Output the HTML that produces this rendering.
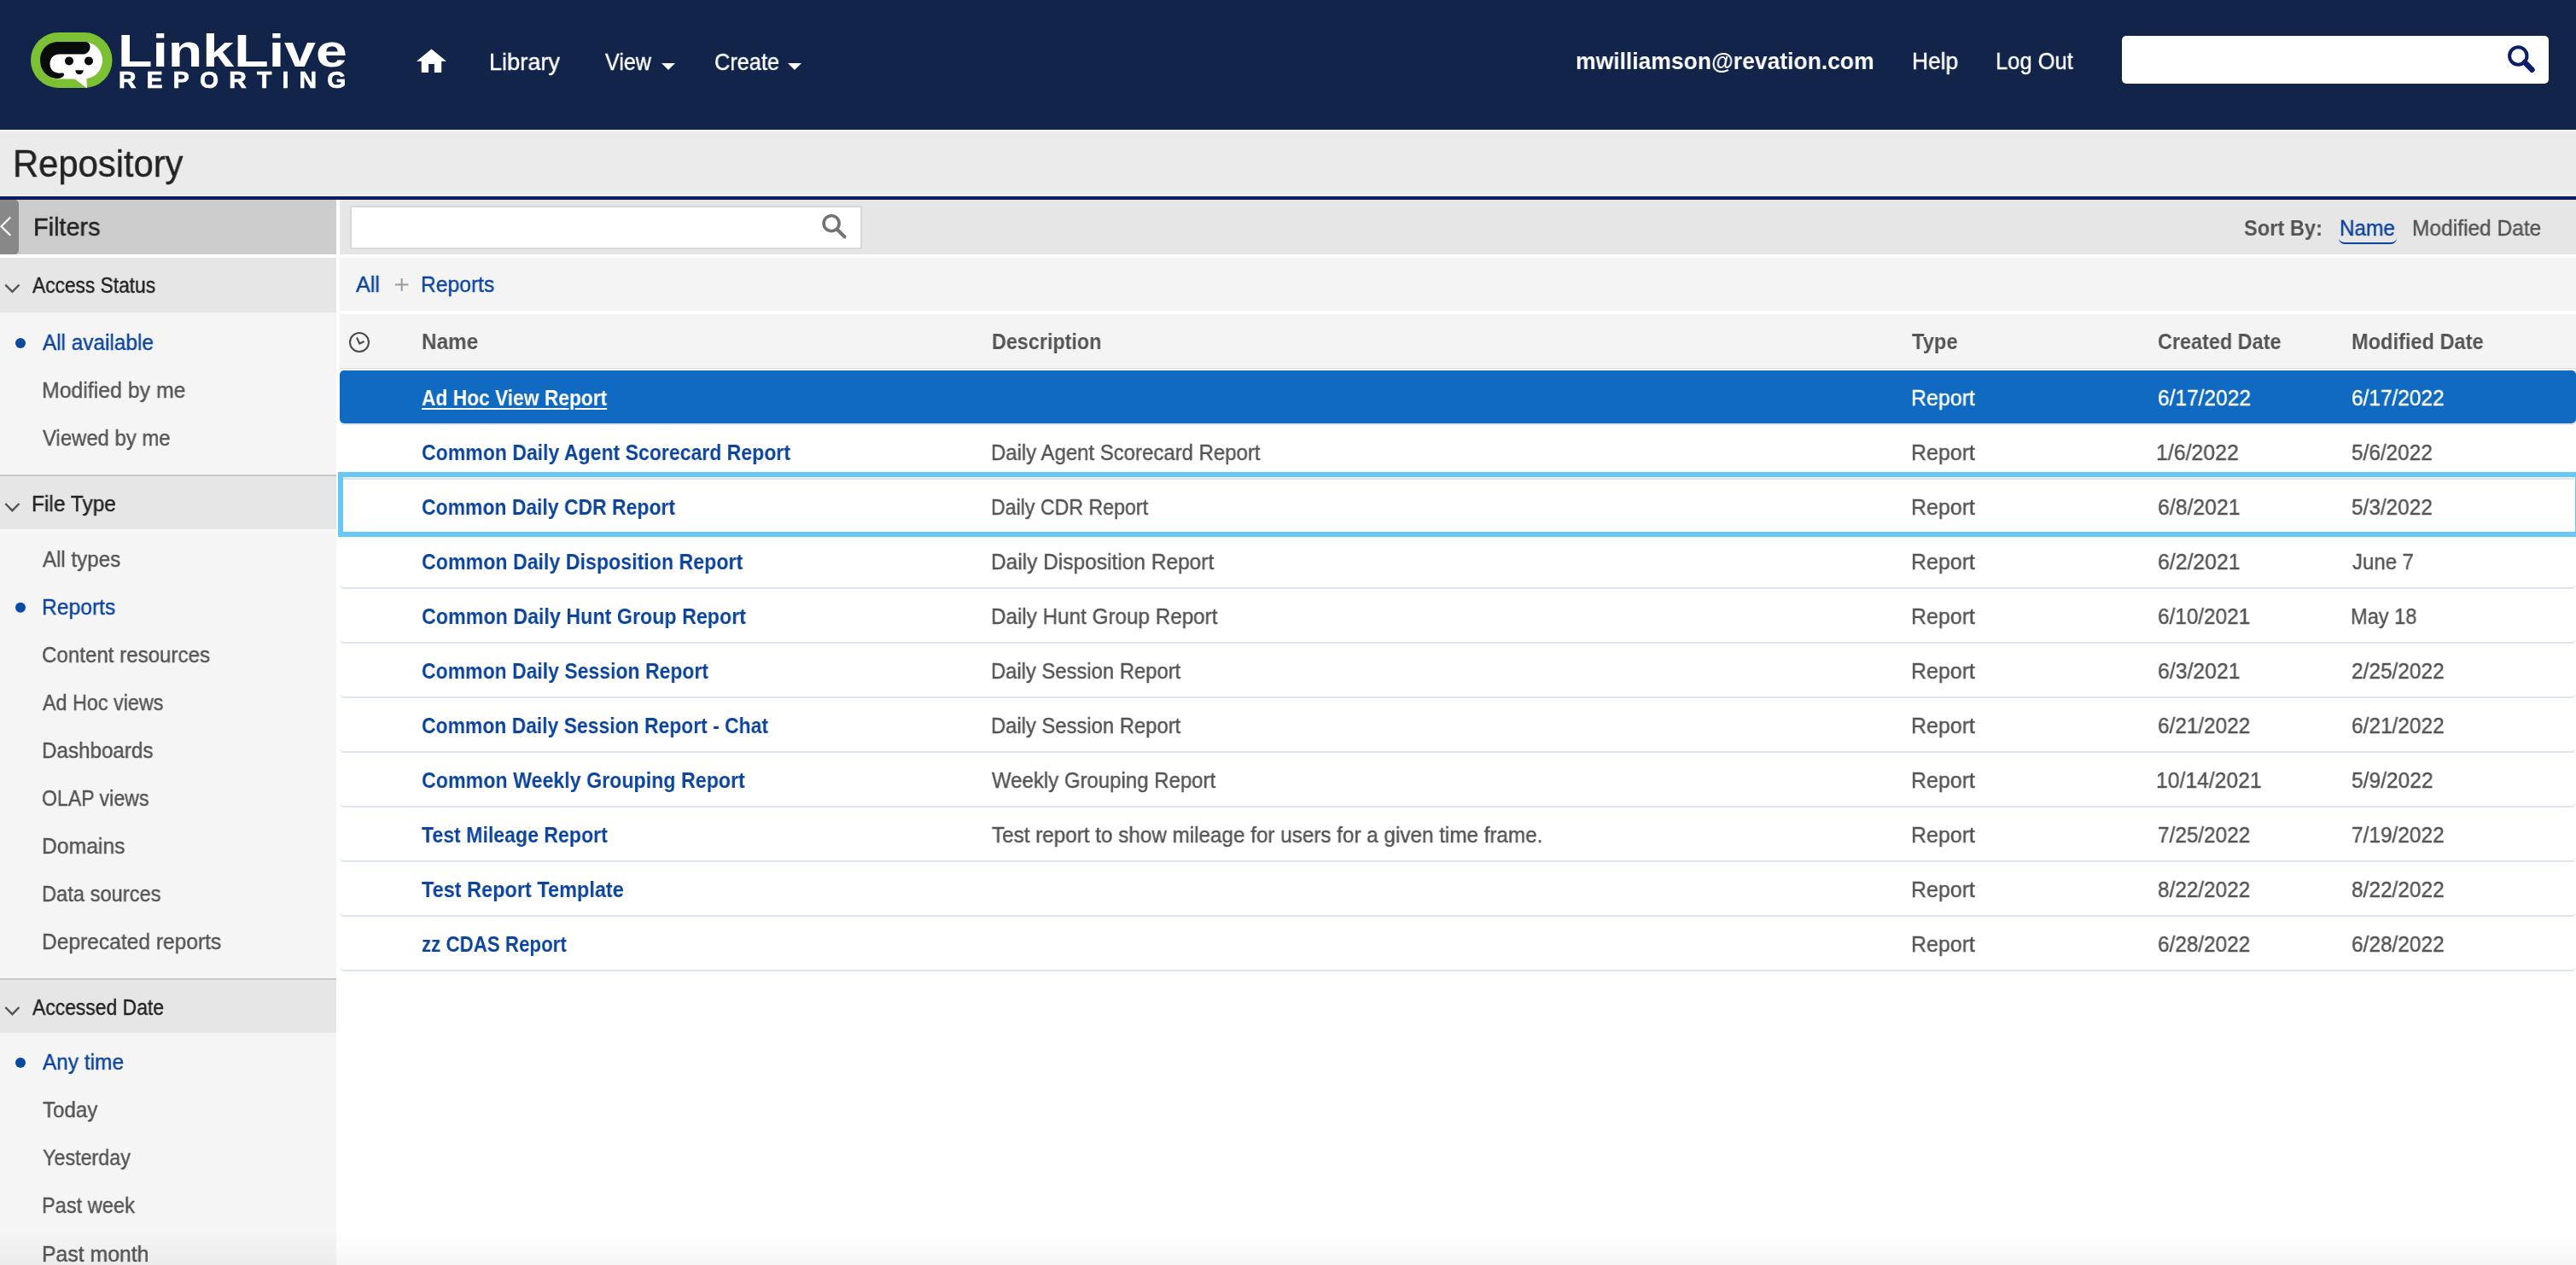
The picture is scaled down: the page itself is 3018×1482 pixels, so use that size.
<!DOCTYPE html>
<html>
<head>
<meta charset="utf-8">
<style>
html,body{margin:0;padding:0;}
body{width:3018px;height:1482px;overflow:hidden;position:relative;background:#fff;font-family:"Liberation Sans", sans-serif;}
.b{position:absolute;}
.t{position:absolute;white-space:nowrap;line-height:1;transform-origin:0 0;will-change:transform;font-family:"Liberation Sans", sans-serif;}
svg{position:absolute;overflow:visible;}
</style>
</head>
<body>
<!-- header -->
<div class="b" style="left:0;top:0;width:3018px;height:152px;background:#12244a"></div>
<div class="b" style="left:0;top:152px;width:3018px;height:2px;background:#fff"></div>
<div class="b" style="left:0;top:154px;width:3018px;height:76px;background:#ebebeb"></div>
<div class="b" style="left:0;top:230px;width:3018px;height:4px;background:#0a1d63"></div>

<!-- logo -->
<svg style="left:0;top:0" width="420" height="152" viewBox="0 0 420 152">
  <rect x="36" y="38" width="95.5" height="65" rx="32.5" ry="32.5" fill="#7cc033"/>
  <rect x="47" y="49" width="73" height="43.5" rx="21.7" ry="21.7" fill="#fff"/>
  <path d="M87,92 L102,103.5 L101.5,92 Z" fill="#fff"/>
  <path d="M68,49 L100,49 C106,49 107,56 104,60 C102,63 99,63.5 96,63.5 L70,63.5 C62,63.5 58.5,69 58.5,75 C58.5,82 64,86.5 72,85.5 C75,85 76,87 74.5,89 C73,91 70,92 68,92 C56,92 47,83 47,70.5 C47,58 56,49 68,49 Z" fill="#0a0c0c"/>
  <circle cx="81" cy="71.4" r="5" fill="#0a0c0c"/>
  <circle cx="104" cy="71.4" r="5" fill="#0a0c0c"/>
  <path d="M88.3,82.2 L97.8,82.2 C97.5,85.5 95.5,87.3 93,87.3 C90.5,87.3 88.6,85.5 88.3,82.2 Z" fill="#0a0c0c"/>
</svg>
<div class="t" style="left:137.5px;top:32.9px;font-size:53px;font-weight:700;color:#fff;transform:scaleX(1.25);letter-spacing:0px">LinkLive</div>
<div class="t" style="left:139px;top:79.4px;font-size:28.4px;font-weight:700;color:#fff;letter-spacing:12.2px;-webkit-text-stroke:0.7px #fff">REPORTING</div>

<!-- home icon -->
<svg style="left:0;top:0" width="600" height="152">
  <path d="M505.5,57.6 L523,71.7 L517.2,71.7 L517.2,85 L508.9,85 L508.9,75 L502.1,75 L502.1,85 L493.8,85 L493.8,71.7 L488,71.7 Z" fill="#fff"/>
  <path d="M775,74 L791,74 L783,82 Z" fill="#fff"/>
</svg>
<svg style="left:0;top:0" width="1000" height="152">
  <path d="M923,74 L939,74 L931,82 Z" fill="#fff"/>
</svg>

<!-- header search -->
<div class="b" style="left:2486px;top:42px;width:500px;height:56px;background:#fff;border-radius:5px"></div>
<svg style="left:0;top:0" width="3018" height="152">
  <circle cx="2950.3" cy="65.5" r="10.2" fill="none" stroke="#0a1f66" stroke-width="4"/>
  <line x1="2958" y1="73" x2="2966.5" y2="81.7" stroke="#0a1f66" stroke-width="6.5" stroke-linecap="round"/>
</svg>

<!-- sidebar -->
<div class="b" style="left:0;top:234px;width:394px;height:1248px;background:#f5f5f5"></div>
<div class="b" style="left:394px;top:234px;width:4px;height:1248px;background:#fff"></div>
<div class="b" style="left:0;top:234px;width:394px;height:64px;background:#cccccc"></div>
<div class="b" style="left:0;top:234px;width:22px;height:64px;background:#888888;border-radius:0 5px 5px 0"></div>
<div class="b" style="left:0;top:298px;width:394px;height:4px;background:#fff"></div>
<div class="b" style="left:0;top:302px;width:394px;height:64px;background:#e6e6e6"></div>
<div class="b" style="left:0;top:556px;width:394px;height:2px;background:#c9c9c9"></div>
<div class="b" style="left:0;top:558px;width:394px;height:62px;background:#e6e6e6"></div>
<div class="b" style="left:0;top:1146px;width:394px;height:2px;background:#c9c9c9"></div>
<div class="b" style="left:0;top:1148px;width:394px;height:62px;background:#e6e6e6"></div>
<svg style="left:0;top:0" width="400" height="1482">
  <polyline points="12.2,254.5 1.5,265.2 12.2,275.8" fill="none" stroke="#fff" stroke-width="2.2"/>
  <polyline points="6.3,333.7 14.4,341.9 22.5,333.7" fill="none" stroke="#555" stroke-width="2.4"/>
  <polyline points="6.3,590 14.4,598.2 22.5,590" fill="none" stroke="#555" stroke-width="2.4"/>
  <polyline points="6.3,1180 14.4,1188.2 22.5,1180" fill="none" stroke="#555" stroke-width="2.4"/>
  <circle cx="24" cy="402" r="6" fill="#0b4a9e"/>
  <circle cx="24" cy="711.8" r="6" fill="#0b4a9e"/>
  <circle cx="24" cy="1245" r="6" fill="#0b4a9e"/>
</svg>

<!-- main toolbar -->
<div class="b" style="left:398px;top:234px;width:2620px;height:64px;background:#e6e6e6"></div>
<div class="b" style="left:410px;top:240.5px;width:596px;height:47px;background:#fff;border:2px solid #d9d9d9"></div>
<svg style="left:0;top:0" width="1100" height="320">
  <circle cx="974.1" cy="261.7" r="9" fill="none" stroke="#737373" stroke-width="3.6"/>
  <line x1="981" y1="269" x2="989.5" y2="277.5" stroke="#737373" stroke-width="4" stroke-linecap="round"/>
</svg>
<div class="b" style="left:2740px;top:279px;width:68px;height:7px;border-bottom:2.5px solid #0b449c;border-radius:0 0 8px 8px;box-sizing:border-box"></div>

<!-- breadcrumb -->
<div class="b" style="left:398px;top:302px;width:2620px;height:62px;background:#f4f4f4"></div>
<svg style="left:0;top:0" width="600" height="400">
  <line x1="470.7" y1="326" x2="470.7" y2="341" stroke="#999" stroke-width="2"/>
  <line x1="463" y1="333.5" x2="478.4" y2="333.5" stroke="#999" stroke-width="2"/>
</svg>

<!-- table header -->
<div class="b" style="left:398px;top:368px;width:2620px;height:63px;background:#f4f4f4"></div>
<div class="b" style="left:398px;top:430.5px;width:2620px;height:1.5px;background:#d5dde5"></div>
<svg style="left:0;top:0" width="600" height="450">
  <circle cx="421" cy="401" r="11" fill="none" stroke="#4d4d4d" stroke-width="2.1"/>
  <polyline points="418,395.5 421.2,402.5 426.6,400" fill="none" stroke="#4d4d4d" stroke-width="2.1" stroke-linejoin="miter"/>
</svg>

<!-- rows -->
<div class="b" style="left:398px;top:434px;width:2620px;height:62px;background:#106ac1;border-radius:5px"></div>
<div id="rowlines"></div>
<div class='b' style='left:398px;top:434px;width:2620px;height:64px;border-bottom:2px solid #dde4ea;border-radius:5px;box-sizing:border-box'></div><div class='b' style='left:398px;top:498px;width:2620px;height:64px;border-bottom:2px solid #dde4ea;border-radius:5px;box-sizing:border-box'></div><div class='b' style='left:398px;top:562px;width:2620px;height:64px;border-bottom:2px solid #dde4ea;border-radius:5px;box-sizing:border-box'></div><div class='b' style='left:398px;top:626px;width:2620px;height:64px;border-bottom:2px solid #dde4ea;border-radius:5px;box-sizing:border-box'></div><div class='b' style='left:398px;top:690px;width:2620px;height:64px;border-bottom:2px solid #dde4ea;border-radius:5px;box-sizing:border-box'></div><div class='b' style='left:398px;top:754px;width:2620px;height:64px;border-bottom:2px solid #dde4ea;border-radius:5px;box-sizing:border-box'></div><div class='b' style='left:398px;top:818px;width:2620px;height:64px;border-bottom:2px solid #dde4ea;border-radius:5px;box-sizing:border-box'></div><div class='b' style='left:398px;top:882px;width:2620px;height:64px;border-bottom:2px solid #dde4ea;border-radius:5px;box-sizing:border-box'></div><div class='b' style='left:398px;top:946px;width:2620px;height:64px;border-bottom:2px solid #dde4ea;border-radius:5px;box-sizing:border-box'></div><div class='b' style='left:398px;top:1010px;width:2620px;height:64px;border-bottom:2px solid #dde4ea;border-radius:5px;box-sizing:border-box'></div><div class='b' style='left:398px;top:1074px;width:2620px;height:64px;border-bottom:2px solid #dde4ea;border-radius:5px;box-sizing:border-box'></div>

<!-- focus outline -->
<div class="b" style="left:396px;top:553px;width:2627px;height:76px;border:6px solid #66c8f7;box-sizing:border-box"></div>

<span class='t' style='left:572.8px;top:58.7px;font-size:28px;font-weight:400;color:#fff;transform:scaleX(0.9703);-webkit-text-stroke:0.4px #fff;'>Library</span>
<span class='t' style='left:708.5px;top:58.7px;font-size:28px;font-weight:400;color:#fff;transform:scaleX(0.8941);-webkit-text-stroke:0.4px #fff;'>View</span>
<span class='t' style='left:836.7px;top:58.7px;font-size:28px;font-weight:400;color:#fff;transform:scaleX(0.9049);-webkit-text-stroke:0.4px #fff;'>Create</span>
<span class='t' style='left:1845.9px;top:57.8px;font-size:28px;font-weight:700;color:#fff;transform:scaleX(0.9459);'>mwilliamson@revation.com</span>
<span class='t' style='left:2239.8px;top:57.8px;font-size:28px;font-weight:400;color:#fff;transform:scaleX(0.9401);-webkit-text-stroke:0.4px #fff;'>Help</span>
<span class='t' style='left:2337.9px;top:57.8px;font-size:28px;font-weight:400;color:#fff;transform:scaleX(0.9115);-webkit-text-stroke:0.4px #fff;'>Log Out</span>
<span class='t' style='left:15.1px;top:169.6px;font-size:44px;font-weight:400;color:#222;transform:scaleX(0.9484);-webkit-text-stroke:0.4px #222;'>Repository</span>
<span class='t' style='left:38.6px;top:251.5px;font-size:29px;font-weight:400;color:#222;transform:scaleX(0.9943);-webkit-text-stroke:0.4px #222;'>Filters</span>
<span class='t' style='left:37.7px;top:321.8px;font-size:25px;font-weight:400;color:#222;transform:scaleX(0.9091);-webkit-text-stroke:0.4px #222;'>Access Status</span>
<span class='t' style='left:36.6px;top:577.5px;font-size:25px;font-weight:400;color:#222;transform:scaleX(0.9793);-webkit-text-stroke:0.4px #222;'>File Type</span>
<span class='t' style='left:37.7px;top:1167.5px;font-size:25px;font-weight:400;color:#222;transform:scaleX(0.9159);-webkit-text-stroke:0.4px #222;'>Accessed Date</span>
<span class='t' style='left:50.2px;top:388.0px;font-size:26px;font-weight:400;color:#0b449c;transform:scaleX(0.9370);-webkit-text-stroke:0.4px #0b449c;'>All available</span>
<span class='t' style='left:48.6px;top:444.0px;font-size:26px;font-weight:400;color:#545454;transform:scaleX(0.9555);-webkit-text-stroke:0.4px #545454;'>Modified by me</span>
<span class='t' style='left:50.2px;top:500.0px;font-size:26px;font-weight:400;color:#545454;transform:scaleX(0.9187);-webkit-text-stroke:0.4px #545454;'>Viewed by me</span>
<span class='t' style='left:50.2px;top:641.6px;font-size:26px;font-weight:400;color:#545454;transform:scaleX(0.9283);-webkit-text-stroke:0.4px #545454;'>All types</span>
<span class='t' style='left:48.6px;top:697.8px;font-size:26px;font-weight:400;color:#0b449c;transform:scaleX(0.9481);-webkit-text-stroke:0.4px #0b449c;'>Reports</span>
<span class='t' style='left:49.4px;top:753.7px;font-size:26px;font-weight:400;color:#545454;transform:scaleX(0.9273);-webkit-text-stroke:0.4px #545454;'>Content resources</span>
<span class='t' style='left:50.2px;top:809.7px;font-size:26px;font-weight:400;color:#545454;transform:scaleX(0.8978);-webkit-text-stroke:0.4px #545454;'>Ad Hoc views</span>
<span class='t' style='left:48.6px;top:865.7px;font-size:26px;font-weight:400;color:#545454;transform:scaleX(0.9304);-webkit-text-stroke:0.4px #545454;'>Dashboards</span>
<span class='t' style='left:49.4px;top:922.0px;font-size:26px;font-weight:400;color:#545454;transform:scaleX(0.8886);-webkit-text-stroke:0.4px #545454;'>OLAP views</span>
<span class='t' style='left:48.6px;top:978.0px;font-size:26px;font-weight:400;color:#545454;transform:scaleX(0.9502);-webkit-text-stroke:0.4px #545454;'>Domains</span>
<span class='t' style='left:48.6px;top:1033.6px;font-size:26px;font-weight:400;color:#545454;transform:scaleX(0.9104);-webkit-text-stroke:0.4px #545454;'>Data sources</span>
<span class='t' style='left:48.6px;top:1089.5px;font-size:26px;font-weight:400;color:#545454;transform:scaleX(0.9446);-webkit-text-stroke:0.4px #545454;'>Deprecated reports</span>
<span class='t' style='left:50.2px;top:1231.0px;font-size:26px;font-weight:400;color:#0b449c;transform:scaleX(0.9392);-webkit-text-stroke:0.4px #0b449c;'>Any time</span>
<span class='t' style='left:50.2px;top:1287.4px;font-size:26px;font-weight:400;color:#545454;transform:scaleX(0.9253);-webkit-text-stroke:0.4px #545454;'>Today</span>
<span class='t' style='left:50.2px;top:1343.0px;font-size:26px;font-weight:400;color:#545454;transform:scaleX(0.8965);-webkit-text-stroke:0.4px #545454;'>Yesterday</span>
<span class='t' style='left:48.6px;top:1399.3px;font-size:26px;font-weight:400;color:#545454;transform:scaleX(0.9074);-webkit-text-stroke:0.4px #545454;'>Past week</span>
<span class='t' style='left:48.6px;top:1455.6px;font-size:26px;font-weight:400;color:#545454;transform:scaleX(0.9542);-webkit-text-stroke:0.4px #545454;'>Past month</span>
<span class='t' style='left:2628.5px;top:254.7px;font-size:25px;font-weight:700;color:#545454;transform:scaleX(0.9452);'>Sort By:</span>
<span class='t' style='left:2741.0px;top:254.7px;font-size:25px;font-weight:400;color:#0b449c;transform:scaleX(0.9732);-webkit-text-stroke:0.4px #0b449c;'>Name</span>
<span class='t' style='left:2826.0px;top:254.7px;font-size:25px;font-weight:400;color:#545454;transform:scaleX(0.9807);-webkit-text-stroke:0.4px #545454;'>Modified Date</span>
<span class='t' style='left:417.3px;top:320.3px;font-size:26px;font-weight:400;color:#0b449c;transform:scaleX(0.9728);-webkit-text-stroke:0.4px #0b449c;'>All</span>
<span class='t' style='left:492.8px;top:320.3px;font-size:26px;font-weight:400;color:#0b449c;transform:scaleX(0.9481);-webkit-text-stroke:0.4px #0b449c;'>Reports</span>
<span class='t' style='left:493.6px;top:388.1px;font-size:25.5px;font-weight:700;color:#545454;transform:scaleX(0.9538);'>Name</span>
<span class='t' style='left:1161.8px;top:388.1px;font-size:25.5px;font-weight:700;color:#545454;transform:scaleX(0.9156);'>Description</span>
<span class='t' style='left:2240.2px;top:388.1px;font-size:25.5px;font-weight:700;color:#545454;transform:scaleX(0.9302);'>Type</span>
<span class='t' style='left:2527.9px;top:388.1px;font-size:25.5px;font-weight:700;color:#545454;transform:scaleX(0.9180);'>Created Date</span>
<span class='t' style='left:2755.2px;top:388.1px;font-size:25.5px;font-weight:700;color:#545454;transform:scaleX(0.9249);'>Modified Date</span>
<span class='t' style='left:494.4px;top:453.3px;font-size:26px;font-weight:700;color:#fff;transform:scaleX(0.8758);text-decoration:underline;text-decoration-thickness:2px;text-underline-offset:3px;'>Ad Hoc View Report</span>
<span class='t' style='left:2238.6px;top:453.3px;font-size:26px;font-weight:400;color:#fff;transform:scaleX(0.9591);-webkit-text-stroke:0.4px #fff;'>Report</span>
<span class='t' style='left:2527.9px;top:453.3px;font-size:26px;font-weight:400;color:#fff;transform:scaleX(0.9427);-webkit-text-stroke:0.4px #fff;'>6/17/2022</span>
<span class='t' style='left:2755.2px;top:453.3px;font-size:26px;font-weight:400;color:#fff;transform:scaleX(0.9392);-webkit-text-stroke:0.4px #fff;'>6/17/2022</span>
<span class='t' style='left:493.5px;top:517.3px;font-size:26px;font-weight:700;color:#0b449c;transform:scaleX(0.8864);'>Common Daily Agent Scorecard Report</span>
<span class='t' style='left:1160.6px;top:517.3px;font-size:26px;font-weight:400;color:#545454;transform:scaleX(0.9209);-webkit-text-stroke:0.4px #545454;'>Daily Agent Scorecard Report</span>
<span class='t' style='left:2238.6px;top:517.3px;font-size:26px;font-weight:400;color:#545454;transform:scaleX(0.9591);-webkit-text-stroke:0.4px #545454;'>Report</span>
<span class='t' style='left:2526.3px;top:517.3px;font-size:26px;font-weight:400;color:#545454;transform:scaleX(0.9573);-webkit-text-stroke:0.4px #545454;'>1/6/2022</span>
<span class='t' style='left:2755.2px;top:517.3px;font-size:26px;font-weight:400;color:#545454;transform:scaleX(0.9371);-webkit-text-stroke:0.4px #545454;'>5/6/2022</span>
<span class='t' style='left:493.6px;top:581.3px;font-size:26px;font-weight:700;color:#0b449c;transform:scaleX(0.8824);'>Common Daily CDR Report</span>
<span class='t' style='left:1160.6px;top:581.3px;font-size:26px;font-weight:400;color:#545454;transform:scaleX(0.8906);-webkit-text-stroke:0.4px #545454;'>Daily CDR Report</span>
<span class='t' style='left:2238.6px;top:581.3px;font-size:26px;font-weight:400;color:#545454;transform:scaleX(0.9591);-webkit-text-stroke:0.4px #545454;'>Report</span>
<span class='t' style='left:2527.9px;top:581.3px;font-size:26px;font-weight:400;color:#545454;transform:scaleX(0.9548);-webkit-text-stroke:0.4px #545454;'>6/8/2021</span>
<span class='t' style='left:2755.2px;top:581.3px;font-size:26px;font-weight:400;color:#545454;transform:scaleX(0.9371);-webkit-text-stroke:0.4px #545454;'>5/3/2022</span>
<span class='t' style='left:493.5px;top:645.3px;font-size:26px;font-weight:700;color:#0b449c;transform:scaleX(0.8919);'>Common Daily Disposition Report</span>
<span class='t' style='left:1160.6px;top:645.3px;font-size:26px;font-weight:400;color:#545454;transform:scaleX(0.9415);-webkit-text-stroke:0.4px #545454;'>Daily Disposition Report</span>
<span class='t' style='left:2238.6px;top:645.3px;font-size:26px;font-weight:400;color:#545454;transform:scaleX(0.9591);-webkit-text-stroke:0.4px #545454;'>Report</span>
<span class='t' style='left:2527.9px;top:645.3px;font-size:26px;font-weight:400;color:#545454;transform:scaleX(0.9548);-webkit-text-stroke:0.4px #545454;'>6/2/2021</span>
<span class='t' style='left:2756.0px;top:645.3px;font-size:26px;font-weight:400;color:#545454;transform:scaleX(0.9223);-webkit-text-stroke:0.4px #545454;'>June 7</span>
<span class='t' style='left:493.5px;top:709.3px;font-size:26px;font-weight:700;color:#0b449c;transform:scaleX(0.8948);'>Common Daily Hunt Group Report</span>
<span class='t' style='left:1160.6px;top:709.3px;font-size:26px;font-weight:400;color:#545454;transform:scaleX(0.9323);-webkit-text-stroke:0.4px #545454;'>Daily Hunt Group Report</span>
<span class='t' style='left:2238.6px;top:709.3px;font-size:26px;font-weight:400;color:#545454;transform:scaleX(0.9591);-webkit-text-stroke:0.4px #545454;'>Report</span>
<span class='t' style='left:2527.9px;top:709.3px;font-size:26px;font-weight:400;color:#545454;transform:scaleX(0.9357);-webkit-text-stroke:0.4px #545454;'>6/10/2021</span>
<span class='t' style='left:2754.4px;top:709.3px;font-size:26px;font-weight:400;color:#545454;transform:scaleX(0.9090);-webkit-text-stroke:0.4px #545454;'>May 18</span>
<span class='t' style='left:493.6px;top:773.3px;font-size:26px;font-weight:700;color:#0b449c;transform:scaleX(0.8843);'>Common Daily Session Report</span>
<span class='t' style='left:1160.6px;top:773.3px;font-size:26px;font-weight:400;color:#545454;transform:scaleX(0.9153);-webkit-text-stroke:0.4px #545454;'>Daily Session Report</span>
<span class='t' style='left:2238.6px;top:773.3px;font-size:26px;font-weight:400;color:#545454;transform:scaleX(0.9591);-webkit-text-stroke:0.4px #545454;'>Report</span>
<span class='t' style='left:2527.9px;top:773.3px;font-size:26px;font-weight:400;color:#545454;transform:scaleX(0.9548);-webkit-text-stroke:0.4px #545454;'>6/3/2021</span>
<span class='t' style='left:2755.2px;top:773.3px;font-size:26px;font-weight:400;color:#545454;transform:scaleX(0.9392);-webkit-text-stroke:0.4px #545454;'>2/25/2022</span>
<span class='t' style='left:493.6px;top:837.3px;font-size:26px;font-weight:700;color:#0b449c;transform:scaleX(0.8810);'>Common Daily Session Report - Chat</span>
<span class='t' style='left:1160.6px;top:837.3px;font-size:26px;font-weight:400;color:#545454;transform:scaleX(0.9153);-webkit-text-stroke:0.4px #545454;'>Daily Session Report</span>
<span class='t' style='left:2238.6px;top:837.3px;font-size:26px;font-weight:400;color:#545454;transform:scaleX(0.9591);-webkit-text-stroke:0.4px #545454;'>Report</span>
<span class='t' style='left:2527.9px;top:837.3px;font-size:26px;font-weight:400;color:#545454;transform:scaleX(0.9357);-webkit-text-stroke:0.4px #545454;'>6/21/2022</span>
<span class='t' style='left:2755.2px;top:837.3px;font-size:26px;font-weight:400;color:#545454;transform:scaleX(0.9392);-webkit-text-stroke:0.4px #545454;'>6/21/2022</span>
<span class='t' style='left:493.5px;top:901.3px;font-size:26px;font-weight:700;color:#0b449c;transform:scaleX(0.8929);'>Common Weekly Grouping Report</span>
<span class='t' style='left:1162.2px;top:901.3px;font-size:26px;font-weight:400;color:#545454;transform:scaleX(0.9225);-webkit-text-stroke:0.4px #545454;'>Weekly Grouping Report</span>
<span class='t' style='left:2238.6px;top:901.3px;font-size:26px;font-weight:400;color:#545454;transform:scaleX(0.9591);-webkit-text-stroke:0.4px #545454;'>Report</span>
<span class='t' style='left:2526.3px;top:901.3px;font-size:26px;font-weight:400;color:#545454;transform:scaleX(0.9503);-webkit-text-stroke:0.4px #545454;'>10/14/2021</span>
<span class='t' style='left:2755.2px;top:901.3px;font-size:26px;font-weight:400;color:#545454;transform:scaleX(0.9449);-webkit-text-stroke:0.4px #545454;'>5/9/2022</span>
<span class='t' style='left:494.3px;top:965.3px;font-size:26px;font-weight:700;color:#0b449c;transform:scaleX(0.8885);'>Test Mileage Report</span>
<span class='t' style='left:1162.2px;top:965.3px;font-size:26px;font-weight:400;color:#545454;transform:scaleX(0.9324);-webkit-text-stroke:0.4px #545454;'>Test report to show mileage for users for a given time frame.</span>
<span class='t' style='left:2238.6px;top:965.3px;font-size:26px;font-weight:400;color:#545454;transform:scaleX(0.9591);-webkit-text-stroke:0.4px #545454;'>Report</span>
<span class='t' style='left:2527.9px;top:965.3px;font-size:26px;font-weight:400;color:#545454;transform:scaleX(0.9357);-webkit-text-stroke:0.4px #545454;'>7/25/2022</span>
<span class='t' style='left:2755.2px;top:965.3px;font-size:26px;font-weight:400;color:#545454;transform:scaleX(0.9392);-webkit-text-stroke:0.4px #545454;'>7/19/2022</span>
<span class='t' style='left:494.3px;top:1029.3px;font-size:26px;font-weight:700;color:#0b449c;transform:scaleX(0.9039);'>Test Report Template</span>
<span class='t' style='left:2238.6px;top:1029.3px;font-size:26px;font-weight:400;color:#545454;transform:scaleX(0.9591);-webkit-text-stroke:0.4px #545454;'>Report</span>
<span class='t' style='left:2527.9px;top:1029.3px;font-size:26px;font-weight:400;color:#545454;transform:scaleX(0.9357);-webkit-text-stroke:0.4px #545454;'>8/22/2022</span>
<span class='t' style='left:2755.2px;top:1029.3px;font-size:26px;font-weight:400;color:#545454;transform:scaleX(0.9392);-webkit-text-stroke:0.4px #545454;'>8/22/2022</span>
<span class='t' style='left:493.6px;top:1093.3px;font-size:26px;font-weight:700;color:#0b449c;transform:scaleX(0.8580);'>zz CDAS Report</span>
<span class='t' style='left:2238.6px;top:1093.3px;font-size:26px;font-weight:400;color:#545454;transform:scaleX(0.9591);-webkit-text-stroke:0.4px #545454;'>Report</span>
<span class='t' style='left:2527.9px;top:1093.3px;font-size:26px;font-weight:400;color:#545454;transform:scaleX(0.9357);-webkit-text-stroke:0.4px #545454;'>6/28/2022</span>
<span class='t' style='left:2755.2px;top:1093.3px;font-size:26px;font-weight:400;color:#545454;transform:scaleX(0.9392);-webkit-text-stroke:0.4px #545454;'>6/28/2022</span>

<!-- bottom shade -->
<div class="b" style="left:0;top:1442px;width:3018px;height:40px;background:linear-gradient(to bottom, rgba(0,0,0,0), rgba(0,0,0,0.035))"></div>
</body>
</html>
